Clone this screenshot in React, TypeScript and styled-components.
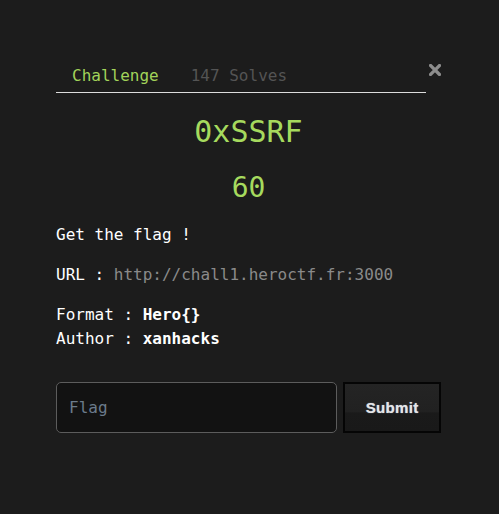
import { createGlobalStyle } from 'styled-components';
import styled from 'styled-components';

const GlobalStyle = createGlobalStyle`
  html, body {
    margin: 0;
    padding: 0;
    background: #1c1c1c;
  }
  body {
    font-family: 'DejaVu Sans Mono', 'Liberation Mono', monospace;
    color: #fff;
  }
`;

const Page = styled.div`
  width: 441px;
  height: 514px;
  box-sizing: border-box;
  padding: 57px 0 0 56px;
  background: #1c1c1c;
`;

const Header = styled.div`
  display: flex;
  align-items: flex-start;
`;

const TabList = styled.div`
  flex: 1;
  display: flex;
  border-bottom: 1px solid #dcdcdc;
`;

const Tab = styled.div<{ $active?: boolean }>`
  padding: 7px 16px 4px;
  font-size: 16px;
  line-height: 24px;
  color: ${(p) => (p.$active ? '#a2d35a' : '#545454')};
`;

const Close = styled.button`
  margin: 7px 0 0 1px;
  padding: 0;
  width: 14px;
  height: 12px;
  border: 0;
  background: none;
  display: flex;
  justify-content: flex-end;
  cursor: pointer;
`;

const Title = styled.h2`
  margin: 19px 0 0;
  text-align: center;
  font-size: 30px;
  line-height: 40px;
  font-weight: normal;
  color: #a6da5e;
`;

const Points = styled.h3`
  margin: 18px 0 0;
  text-align: center;
  font-size: 28px;
  line-height: 36px;
  font-weight: normal;
  color: #a6da5e;
`;

const Description = styled.div`
  margin-top: 17px;
  font-size: 16px;
  line-height: 24px;
`;

const Para = styled.p`
  margin: 0 0 16px;
  &:last-child {
    margin-bottom: 0;
  }
`;

const Link = styled.span`
  color: #8a8a8a;
`;

const Form = styled.form`
  display: flex;
  gap: 6px;
  margin-top: 31px;
`;

const FlagInput = styled.input`
  width: 282px;
  height: 51px;
  box-sizing: border-box;
  padding: 0 12px;
  background: #121212;
  border: 1px solid #5c5c5c;
  border-radius: 5px;
  color: #ddd;
  font-family: 'DejaVu Sans Mono', monospace;
  font-size: 16px;
  outline: none;
  &::placeholder {
    color: #6b7b8b;
  }
`;

const SubmitButton = styled.button`
  width: 98px;
  height: 51px;
  box-sizing: border-box;
  border: 2px solid #050505;
  background: linear-gradient(#242424 0%, #212121 60%, #1a1a1a 61%, #191919 100%);
  color: #e6e6e6;
  font-family: 'Liberation Sans', Arial, sans-serif;
  font-weight: bold;
  font-size: 15px;
  letter-spacing: 0.3px;
  text-shadow: 0 0 1px #9bb6d6;
  cursor: pointer;
`;

export default function App() {
  return (
    <>
      <GlobalStyle />
      <Page>
        <Header>
          <TabList>
            <Tab $active>Challenge</Tab>
            <Tab>147 Solves</Tab>
          </TabList>
          <Close aria-label="Close">
            <svg width="12" height="12" viewBox="0 0 12 12">
              <path d="M1.5 1.5 L10.5 10.5 M10.5 1.5 L1.5 10.5" stroke="#8c8c8c" strokeWidth="3.2" strokeLinecap="square" />
            </svg>
          </Close>
        </Header>
        <Title>0xSSRF</Title>
        <Points>60</Points>
        <Description>
          <Para>Get the flag !</Para>
          <Para>
            URL : <Link>http://chall1.heroctf.fr:3000</Link>
          </Para>
          <Para>
            Format : <b>Hero{'{}'}</b>
            <br />
            Author : <b>xanhacks</b>
          </Para>
        </Description>
        <Form onSubmit={(e) => e.preventDefault()}>
          <FlagInput placeholder="Flag" />
          <SubmitButton type="submit">Submit</SubmitButton>
        </Form>
      </Page>
    </>
  );
}
